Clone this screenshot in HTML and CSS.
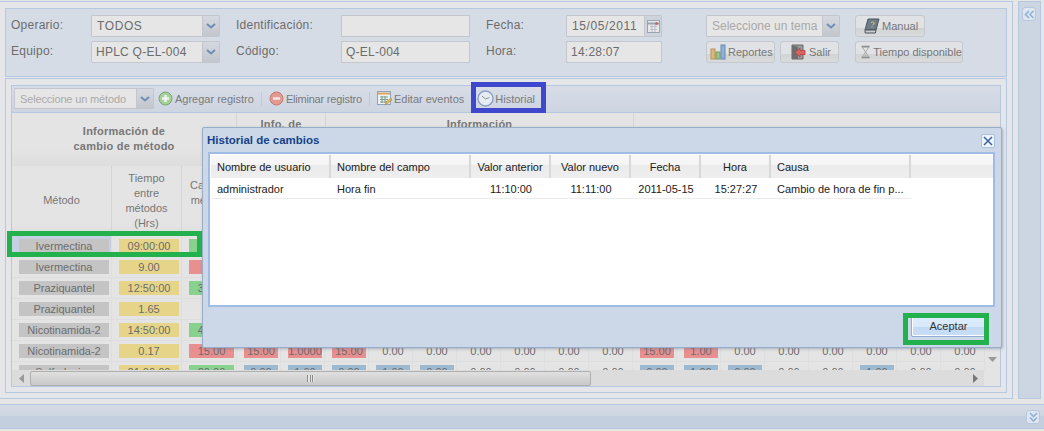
FILE: index.html
```html
<!DOCTYPE html>
<html lang="es">
<head>
    <meta charset="UTF-8">
    <title>Historial de cambios</title>
    <link rel="stylesheet" href="styles.css">
</head>
<body>
    <div class="workspace">
        <div class="main-col">
            <div class="top-panel">
                <div class="form-grid">
                    <label>Operario:</label>
                    <div class="combo"><span class="combo-text wide">TODOS</span><span class="combo-btn"><svg width="10" height="6" viewBox="0 0 10 6"><path d="M1 1l4 3.500L9 1" fill="none" stroke="#6f8db8" stroke-width="2"/></svg></span></div>
                    <label class="label-gap">Identificación:</label>
                    <div class="field"></div>
                    <label class="label-gap">Fecha:</label>
                    <div class="combo"><span class="combo-text wide">15/05/2011</span><span class="combo-btn date-btn"><svg width="13" height="13" viewBox="0 0 13 13"><rect x=".5" y=".5" width="12" height="12" fill="#e8e8ea" stroke="#9aa3b0"/><path d="M1 3.500h11" stroke="#9aa3b0" stroke-width="2"/><path d="M3 6.500h7M3 9.500h7M5 5v7M8 5v7" stroke="#b9c0ca"/><circle cx="9.500" cy="3.500" r="1.500" fill="#c46a6a"/></svg></span></div>
                    <div class="combo combo-muted combo-tema"><span class="combo-text">Seleccione un tema</span><span class="combo-btn"><svg width="10" height="6" viewBox="0 0 10 6"><path d="M1 1l4 3.500L9 1" fill="none" stroke="#6f8db8" stroke-width="2"/></svg></span></div>
                    <button class="btn btn-manual"><svg width="16" height="16" viewBox="0 0 16 16"><path d="M4 1h11l-3 11H1z" fill="#6d7c86" stroke="#4a5560"/><path d="M1 12h11l-.6 3H1.200z" fill="#c8cdd0" stroke="#4a5560"/><path d="M7 4.500q2-1.500 3 0t-1.500 2.500M8 8.500v1" fill="none" stroke="#d9c878"/></svg>Manual</button>

                    <label>Equipo:</label>
                    <div class="combo"><span class="combo-text tight">HPLC Q-EL-004</span><span class="combo-btn"><svg width="10" height="6" viewBox="0 0 10 6"><path d="M1 1l4 3.500L9 1" fill="none" stroke="#6f8db8" stroke-width="2"/></svg></span></div>
                    <label class="label-gap">Código:</label>
                    <div class="field">Q-EL-004</div>
                    <label class="label-gap">Hora:</label>
                    <div class="field">14:28:07</div>
                    <div class="btn-pair">
                        <button class="btn btn-reportes"><svg width="16" height="16" viewBox="0 0 16 16"><rect x="1" y="5" width="4" height="10" fill="#dcb978" stroke="#b5935a"/><rect x="6" y="8" width="4" height="7" fill="#9cc58c" stroke="#749a66"/><rect x="11" y="1" width="4" height="14" fill="#8fb2d8" stroke="#6688ae"/></svg>Reportes</button>
                        <button class="btn btn-salir"><svg width="16" height="16" viewBox="0 0 16 16"><path d="M2 1h11v14H2z" fill="#9a9a9a" stroke="#666"/><path d="M2 1l6 2v12H2z" fill="#6e6e6e"/><path d="M15 6.500h-5V4L5 8.500l5 4.500v-2.500h5z" fill="#d96464" stroke="#b84a4a"/></svg>Salir</button>
                    </div>
                    <button class="btn btn-tiempo"><svg width="14" height="16" viewBox="0 0 14 16"><path d="M2 1h10M2 15h10" stroke="#8a8a8a" stroke-width="2"/><path d="M3 2l4 6-4 6h8L7 8l4-6z" fill="#e6e6e6" stroke="#9a9a9a"/><path d="M5 13l2-3 2 3z" fill="#b5b5b5"/></svg>Tiempo disponible</button>
                </div>
            </div>

            <div class="main-panel">
                <div class="grid-panel">
                    <div class="toolbar">
                        <div class="combo combo-muted combo-method"><span class="combo-text">Seleccione un método</span><span class="combo-btn"><svg width="10" height="6" viewBox="0 0 10 6"><path d="M1 1l4 3.500L9 1" fill="none" stroke="#6f8db8" stroke-width="2"/></svg></span></div>
                        <span class="tool"><svg width="15" height="15" viewBox="0 0 15 15"><circle cx="7.500" cy="7.500" r="6.500" fill="#a6cf9a" stroke="#7ba672"/><path d="M7.500 4v7M4 7.500h7" stroke="#f0f5ee" stroke-width="2.400"/></svg>Agregar registro</span>
                        <span class="tool-sep"></span>
                        <span class="tool tool-tight"><svg width="15" height="15" viewBox="0 0 15 15"><circle cx="7.500" cy="7.500" r="6.500" fill="#e29a90" stroke="#c47a72"/><path d="M4 7.500h7" stroke="#f5ebe9" stroke-width="2.400"/></svg>Eliminar registro</span>
                        <span class="tool-sep"></span>
                        <span class="tool"><svg width="15" height="16" viewBox="0 0 15 16"><rect x=".5" y=".5" width="13" height="13" fill="#eef0f2" stroke="#8ba4c0"/><path d="M1 2.500h12" stroke="#dba45e" stroke-width="2"/><path d="M3 6h8M3 8.500h8M3 11h8M5 5v7M8 5v7" stroke="#7c9f8c"/><path d="M8 14l1-3 5-4 1 2-5 4z" fill="#e0b45c" stroke="#b08a3e" stroke-width=".6"/></svg>Editar eventos</span>
                        <span class="tool-sep tool-sep-last"></span>
                        <span class="tool tool-clock"><svg width="17" height="17" viewBox="0 0 17 17"><circle cx="8.500" cy="8.500" r="7.500" fill="#e7ecf4" stroke="#8b9fc4" stroke-width="1.400"/><path d="M8.500 9l4-1.500M8.500 9L5 6" stroke="#8a8f98"/></svg>Historial</span>
                    </div>

                    <div class="grid-head group-row">
                        <div class="group group-a">Información de<br>cambio de método</div>
                        <div class="group group-b">Info. de</div>
                        <div class="group group-c">Información</div>
                        <div class="group group-d"></div>
                    </div>
                    <div class="grid-head title-row">
                        <div class="head-cell">Método</div>
                        <div class="head-cell">Tiempo<br>entre<br>métodos<br>(Hrs)</div>
                        <div class="head-cell">Cambio<br>método<br>a</div>
                    </div>

                    <div class="grid-body">
                        <div class="rows">
                            <div class="row selected"><div class="cell"><span class="chip gray">Ivermectina</span></div><div class="cell"><span class="chip yellow">09:00:00</span></div><div class="cell"><span class="chip green"></span></div></div>
                            <div class="row"><div class="cell"><span class="chip gray">Ivermectina</span></div><div class="cell"><span class="chip yellow">9.00</span></div><div class="cell"><span class="chip red"></span></div></div>
                            <div class="row"><div class="cell"><span class="chip gray">Praziquantel</span></div><div class="cell"><span class="chip yellow">12:50:00</span></div><div class="cell"><span class="chip green">30.00</span></div></div>
                            <div class="row"><div class="cell"><span class="chip gray">Praziquantel</span></div><div class="cell"><span class="chip yellow">1.65</span></div><div class="cell"></div></div>
                            <div class="row"><div class="cell"><span class="chip gray">Nicotinamida-2</span></div><div class="cell"><span class="chip yellow">14:50:00</span></div><div class="cell"><span class="chip green">40.00</span></div></div>
                            <div class="row">
                                <div class="cell"><span class="chip gray">Nicotinamida-2</span></div><div class="cell"><span class="chip yellow">0.17</span></div><div class="cell"><span class="chip red">15.00</span></div>
                                <div class="cell"><span class="chip red">15.00</span></div><div class="cell"><span class="chip red">1.0000</span></div><div class="cell"><span class="chip red">15.00</span></div>
                                <div class="cell">0.00</div><div class="cell">0.00</div><div class="cell">0.00</div><div class="cell">0.00</div><div class="cell">0.00</div><div class="cell">0.00</div>
                                <div class="cell"><span class="chip red">15.00</span></div><div class="cell"><span class="chip red">1.00</span></div>
                                <div class="cell">0.00</div><div class="cell">0.00</div><div class="cell">0.00</div><div class="cell">0.00</div><div class="cell">0.00</div><div class="cell">0.00</div>
                            </div>
                            <div class="row">
                                <div class="cell"><span class="chip gray">Sulfadoxina</span></div><div class="cell"><span class="chip yellow">21:00:00</span></div><div class="cell"><span class="chip green">20.00</span></div>
                                <div class="cell"><span class="chip blue">0.00</span></div><div class="cell"><span class="chip blue">1.00</span></div><div class="cell"><span class="chip blue">0.00</span></div>
                                <div class="cell"><span class="chip blue">1.00</span></div><div class="cell"><span class="chip blue">0.00</span></div><div class="cell">0.00</div><div class="cell">0.00</div><div class="cell">0.00</div><div class="cell">0.00</div>
                                <div class="cell"><span class="chip blue">0.00</span></div><div class="cell"><span class="chip blue">1.00</span></div>
                                <div class="cell"><span class="chip blue">0.00</span></div><div class="cell">0.00</div><div class="cell">0.00</div><div class="cell"><span class="chip blue">1.00</span></div><div class="cell">0.00</div><div class="cell">0.00</div>
                            </div>
                        </div>
                        <div class="vscroll"><svg width="9" height="5" viewBox="0 0 9 5"><path d="M0 0h9L4.500 5z" fill="#9a9a9a"/></svg></div>
                    </div>

                    <div class="hscroll">
                        <span class="arrow"><svg width="5" height="9" viewBox="0 0 5 9"><path d="M5 0v9L0 4.500z" fill="#999"/></svg></span>
                        <div class="thumb"><span class="grip"></span></div>
                        <span class="arrow arrow-right"><svg width="5" height="9" viewBox="0 0 5 9"><path d="M0 0v9l5-4.500z" fill="#777"/></svg></span>
                        <span class="corner"></span>
                    </div>
                </div>
            </div>
        </div>
        <div class="side-col">
            <span class="tool-btn"><svg width="11" height="9" viewBox="0 0 11 9"><path d="M5 1L1.500 4.500 5 8M9.500 1L6 4.500 9.500 8" fill="none" stroke="#8fb0d8" stroke-width="1.600"/></svg></span>
        </div>
    </div>
    <div class="bottom-bar">
        <span class="tool-btn"><svg width="9" height="11" viewBox="0 0 9 11"><path d="M1 1l3.500 3.500L8 1M1 5.500L4.500 9 8 5.500" fill="none" stroke="#8fb0d8" stroke-width="1.600"/></svg></span>
    </div>

    <div class="dialog">
        <div class="dialog-title">
            <span>Historial de cambios</span>
            <span class="dialog-close"><svg width="10" height="10" viewBox="0 0 10 10"><path d="M1 1l8 8M9 1L1 9" stroke="#3b5f9a" stroke-width="1.500"/></svg></span>
        </div>
        <div class="dialog-grid">
            <div class="dg-row dg-head">
                <div class="dg-cell left">Nombre de usuario</div>
                <div class="dg-cell left">Nombre del campo</div>
                <div class="dg-cell">Valor anterior</div>
                <div class="dg-cell">Valor nuevo</div>
                <div class="dg-cell">Fecha</div>
                <div class="dg-cell">Hora</div>
                <div class="dg-cell left">Causa</div>
                <div class="dg-fill"></div>
            </div>
            <div class="dg-row dg-data">
                <div class="dg-cell left">administrador</div>
                <div class="dg-cell left">Hora fin</div>
                <div class="dg-cell">11:10:00</div>
                <div class="dg-cell">11:11:00</div>
                <div class="dg-cell">2011-05-15</div>
                <div class="dg-cell">15:27:27</div>
                <div class="dg-cell left">Cambio de hora de fin p...</div>
            </div>
        </div>
        <div class="dialog-foot">
            <button class="accept">Aceptar</button>
        </div>
    </div>

    <div class="mark mark-blue"></div>
    <div class="mark mark-row"></div>
    <div class="mark mark-accept"></div>
</body>
</html>
```

FILE: styles.css
```css
* {
    box-sizing: border-box;
}

html, body {
    margin: 0;
    height: 431px;
    overflow: hidden;
}

body {
    position: relative;
    background: #e6e6e6;
    font-family: "Liberation Sans", Arial, sans-serif;
    font-size: 12px;
    color: #6c6c6c;
}

.workspace {
    display: flex;
    height: 398px;
    margin-top: 1px;
    gap: 5px;
}

.main-col {
    width: 1013px;
    border: 1px solid #b5c8e0;
    border-left: 0;
    padding: 6px 5px 5px;
    background: #e4e6ea;
    display: flex;
    flex-direction: column;
    gap: 1px;
}

.side-col {
    width: 23px;
    border: 1px solid #b5c8e0;
    background: #ccd5e2;
    padding: 5px 3px;
}

.top-panel {
    height: 70px;
    border: 1px solid #b5c8e0;
    background: #d6dce6;
    padding: 6px 5px;
    letter-spacing: 0.25px;
}

.form-grid {
    display: grid;
    grid-template-columns: 80px 129px 121px 129px 96px 96px 193px 110px;
    grid-template-rows: 22px 22px;
    row-gap: 4px;
    align-items: center;
}

.form-grid label {
    line-height: 16px;
    position: relative;
    top: -1px;
}

.label-gap {
    padding-left: 16px;
}

.combo {
    display: flex;
    height: 22px;
    border: 1px solid #c3c6cc;
    border-radius: 1px;
    background: #e6e6e6;
}

.combo-text {
    flex: 1;
    padding-left: 5px;
    line-height: 21px;
    white-space: nowrap;
    overflow: hidden;
}

.combo-text.tight {
    padding-left: 4px;
}

.combo-text.wide {
    letter-spacing: 0.6px;
}

.combo-btn {
    width: 17px;
    display: flex;
    align-items: center;
    justify-content: center;
    background: linear-gradient(#d5d9df, #c3c7cd);
    border-left: 1px solid #c3c6cc;
}

.date-btn {
    background: #cfd4dc;
}

.combo-muted {
    color: #a9a9a9;
}

.combo-tema {
    margin: 0 15px 0 44px;
    letter-spacing: 0;
}

.field {
    height: 22px;
    border: 1px solid #c3c6cc;
    background: #e6e6e6;
    padding-left: 4px;
    line-height: 21px;
}

.btn {
    display: inline-flex;
    align-items: center;
    gap: 2px;
    height: 22px;
    padding: 0 0 0 3px;
    border: 1px solid #c5c8cc;
    border-radius: 3px;
    background: linear-gradient(#e0e2e6 0, #e0e2e6 60%, #d2d3d4 60%, #dadbdc 100%);
    color: #777;
    font-family: inherit;
    font-size: 11px;
    letter-spacing: 0;
    white-space: nowrap;
}

.btn-manual {
    width: 70px;
    padding-left: 8px;
}

.btn-pair {
    display: flex;
    gap: 5px;
    margin-left: 44px;
}

.btn-reportes {
    width: 69px;
}

.btn-salir {
    width: 59px;
    padding-left: 9px;
    gap: 3px;
}

.btn-tiempo {
    width: 108px;
    padding-left: 4px;
}

.main-panel {
    flex: 1;
    border: 1px solid #b5c8e0;
    background: #e4e6ea;
    padding: 6px 5px 5px;
}

.grid-panel {
    height: 302px;
    border: 1px solid #b5c8e0;
    background: #e4e4e4;
    display: flex;
    flex-direction: column;
    font-size: 11px;
}

.toolbar {
    height: 27px;
    flex: none;
    display: flex;
    align-items: center;
    padding: 0 0 1px 2px;
    background: linear-gradient(#d8dde7, #cdd5e1);
    border-bottom: 1px solid #b5c8e0;
}

.combo-method {
    width: 140px;
    height: 21px;
    margin-right: 4px;
    letter-spacing: -0.15px;
}

.combo-method .combo-text {
    line-height: 20px;
}

.tool {
    display: inline-flex;
    align-items: center;
    gap: 2px;
    color: #7a7a7a;
}

.tool-tight {
    letter-spacing: -0.2px;
}

.tool-clock {
    gap: 1px;
}

.tool-sep {
    width: 1px;
    height: 14px;
    margin: 0 7px;
    background: #c3cad6;
}

.tool-sep-last {
    margin-right: 5px;
}

.grid-head {
    display: grid;
    grid-template-columns: 100px 70px 55px 1fr;
    flex: none;
    border-bottom: 1px solid #dcdcdc;
    color: #777;
}

.group-row {
    height: 53px;
    grid-template-columns: 225px 89px 308px 1fr;
    background: linear-gradient(#e4e4e4 0, #e4e4e4 70%, #dedede 100%);
}

.group {
    text-align: center;
    font-weight: bold;
    line-height: 15px;
    letter-spacing: 0.25px;
    border-right: 1px solid #d5d5d5;
}

.group-a {
    padding-top: 11px;
}

.group-b, .group-c {
    padding-top: 4px;
}

.group-d {
    border-right: 0;
}

.title-row {
    height: 70px;
    background: linear-gradient(#e4e4e4 0, #e4e4e4 85%, #dedede 100%);
}

.head-cell {
    display: flex;
    align-items: center;
    justify-content: center;
    text-align: center;
    line-height: 15px;
    border-right: 1px solid #d5d5d5;
}

.grid-body {
    flex: 1;
    min-height: 0;
    display: flex;
    overflow: hidden;
}

.rows {
    flex: 1;
    min-width: 0;
}

.row {
    display: grid;
    grid-template-columns: 100px 70px 55px repeat(17, 44px);
    height: 21px;
}

.cell {
    display: flex;
    align-items: center;
    justify-content: center;
    padding: 0 2px 1px 7px;
    border-right: 1px solid #dedede;
    border-bottom: 1px solid #dedede;
    line-height: 14px;
    white-space: nowrap;
    overflow: hidden;
}

.selected .cell:first-child {
    background: #c5d1e2;
}

.chip {
    display: block;
    width: 100%;
    height: 14px;
    text-align: center;
    overflow: hidden;
}

.gray { background: #c4c4c4; }
.yellow { background: #e6d588; }
.green { background: #88d18e; }
.red { background: #e88f8f; }
.blue { background: #9db9cf; }

.vscroll {
    width: 16px;
    flex: none;
    display: flex;
    justify-content: center;
    align-items: flex-end;
    padding-bottom: 8px;
    background: #e4e4e4;
    border-left: 1px solid #dedede;
}

.hscroll {
    height: 16px;
    flex: none;
    display: flex;
    background: #dcdcdc;
    align-items: center;
}

.arrow {
    width: 18px;
    display: flex;
    justify-content: center;
}

.thumb {
    width: 561px;
    height: 15px;
    border: 1px solid #b0b0b0;
    border-radius: 2px;
    background: linear-gradient(#e0e0e0, #c8c8c8);
    display: flex;
    align-items: center;
    justify-content: center;
}

.grip {
    width: 7px;
    height: 7px;
    background: repeating-linear-gradient(90deg, #8a8a8a 0, #8a8a8a 1px, #e6e6e6 1px, #e6e6e6 2.5px);
}

.arrow-right {
    margin-left: auto;
}

.corner {
    width: 16px;
    height: 16px;
    background: #e4e4e4;
}

.tool-btn {
    display: flex;
    width: 14px;
    height: 14px;
    align-items: center;
    justify-content: center;
    border: 1px solid #b5c8e0;
    border-radius: 3px;
    background: #dfe6ef;
}

.bottom-bar {
    height: 25px;
    margin-top: 5px;
    border-top: 1px solid #b5c8e0;
    border-bottom: 1px solid #b5c8e0;
    background: linear-gradient(#d6dce6 0, #ccd4e0 48%, #c3cfde 48%, #c3cfde 100%);
    display: flex;
    justify-content: flex-end;
    padding: 5px 4px 0 0;
}

.dialog {
    position: absolute;
    left: 202px;
    top: 127px;
    width: 800px;
    height: 221px;
    border: 1px solid #98adc8;
    border-radius: 2px;
    background: #ccd8e7;
    box-shadow: 1px 1px 3px rgba(90, 110, 140, 0.45);
    padding: 0 6px 0 5px;
    display: flex;
    flex-direction: column;
    font-size: 11px;
    color: #222;
}

.dialog-title {
    height: 24px;
    flex: none;
    display: flex;
    align-items: center;
    justify-content: space-between;
    font-weight: bold;
    font-size: 11.5px;
    color: #15428b;
    margin-left: -1px;
}

.dialog-close {
    display: flex;
    align-items: center;
    justify-content: center;
    width: 14px;
    height: 14px;
    margin-top: 1px;
    border: 1px solid #a9c2e0;
    border-radius: 2px;
    background: #eef3fa;
}

.dialog-grid {
    height: 155px;
    flex: none;
    border: 2px solid #9fbbe6;
    background: #fff;
    padding-top: 1px;
}

.dg-row {
    display: grid;
    grid-template-columns: 120px 140px 80px 80px 70px 70px 140px 1fr;
    margin-left: 1px;
}

.dg-head {
    height: 23px;
    background: linear-gradient(#f8f8f8 0, #f4f4f4 45%, #ebebeb 45%, #eee 100%);
}

.dg-head .dg-cell {
    border-right: 2px solid #d8d8d8;
}

.dg-data {
    height: 21px;
    border-bottom: 1px solid #ececec;
    width: 700px;
    padding-top: 1px;
}

.dg-cell {
    display: flex;
    align-items: center;
    justify-content: center;
    padding: 0 6px;
    white-space: nowrap;
    overflow: hidden;
}

.dg-cell.left {
    justify-content: flex-start;
}

.dialog-foot {
    flex: 1;
    display: flex;
    justify-content: flex-end;
    align-items: center;
    padding: 0 9px 3px 0;
}

.accept {
    width: 75px;
    height: 22px;
    border: 1px solid #8fb0d6;
    border-radius: 2px;
    box-shadow: inset 0 0 0 1px #fff;
    background: linear-gradient(#dcecfc 0, #d8e9fb 55%, #c3daf4 55%, #c8def6 100%);
    color: #333;
    font-family: inherit;
    font-size: 11px;
}

.mark {
    position: absolute;
    border: 5px solid #22b14c;
}

.mark-blue {
    left: 471px;
    top: 82px;
    width: 75px;
    height: 31px;
    border-color: #3f48cc;
}

.mark-row {
    left: 7px;
    top: 231px;
    width: 195px;
    height: 26px;
}

.mark-accept {
    left: 903px;
    top: 313px;
    width: 86px;
    height: 32px;
}
```
